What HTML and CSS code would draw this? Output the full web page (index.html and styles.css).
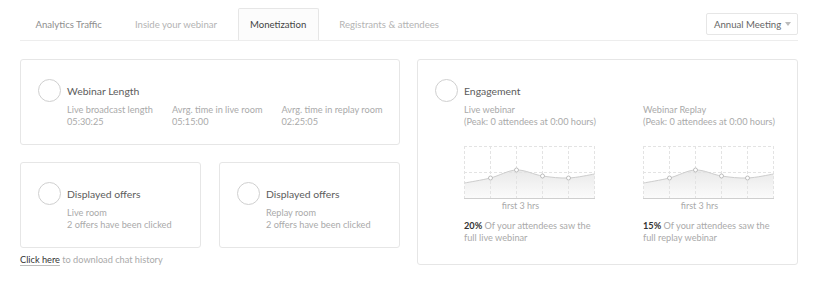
FILE: index.html
```html
<!DOCTYPE html>
<html>
<head>
<meta charset="utf-8">
<link rel="stylesheet" href="styles.css">
</head>
<body>
<div class="page">
  <div class="tabbar">
    <div class="tabs">
      <div class="tab tab-dark">Analytics Traffic</div>
      <div class="tab">Inside your webinar</div>
      <div class="tab active">Monetization</div>
      <div class="tab">Registrants &amp; attendees</div>
    </div>
    <div class="select">
      <span>Annual Meeting</span>
      <span class="caret"></span>
    </div>
  </div>

  <div class="main">
    <div class="left">
      <div class="card">
        <div class="card-head"><span class="ring"></span><span class="title">Webinar Length</span></div>
        <div class="card-body stats">
          <div class="stat"><div>Live broadcast length</div><div>05:30:25</div></div>
          <div class="stat"><div>Avrg. time in live room</div><div>05:15:00</div></div>
          <div class="stat"><div>Avrg. time in replay room</div><div>02:25:05</div></div>
        </div>
      </div>
      <div class="offers">
        <div class="card">
          <div class="card-head"><span class="ring"></span><span class="title">Displayed offers</span></div>
          <div class="card-body"><div>Live room</div><div>2 offers have been clicked</div></div>
        </div>
        <div class="card">
          <div class="card-head"><span class="ring"></span><span class="title">Displayed offers</span></div>
          <div class="card-body"><div>Replay room</div><div>2 offers have been clicked</div></div>
        </div>
      </div>
      <div class="chat"><a class="link">Click here</a> to download chat history</div>
    </div>

    <div class="card engage">
      <div class="card-head"><span class="ring"></span><span class="title">Engagement</span></div>
      <div class="card-body eng-cols">
        <div class="eng-col">
          <div>Live webinar</div>
          <div>(Peak: 0 attendees at 0:00 hours)</div>
          <svg class="chart" width="131" height="53" viewBox="0 0 131 53">
            <defs>
              <linearGradient id="g1" x1="0" y1="0" x2="0" y2="1">
                <stop offset="0" stop-color="#e9e9e9"/>
                <stop offset="1" stop-color="#fbfbfb"/>
              </linearGradient>
            </defs>
            <path d="M0.5 37 C4.8 36.2 17.3 34.2 26.5 32 C35.2 29.8 43.8 24.3 52.5 24 C61.2 23.7 69.8 28.7 78.5 30 C87.2 31.3 95.8 32.3 104.5 32 C113.2 31.7 126.2 28.7 130.5 28 L130.5 52 L0.5 52 Z" fill="url(#g1)"/>
            <g stroke="#e3e3e3" stroke-dasharray="3 2" fill="none">
              <line x1="0" y1="0.5" x2="131" y2="0.5"/>
              <line x1="0" y1="26.5" x2="131" y2="26.5"/>
              <line x1="0.5" y1="0" x2="0.5" y2="52"/>
              <line x1="26.5" y1="0" x2="26.5" y2="52"/>
              <line x1="52.5" y1="0" x2="52.5" y2="52"/>
              <line x1="78.5" y1="0" x2="78.5" y2="52"/>
              <line x1="104.5" y1="0" x2="104.5" y2="52"/>
              <line x1="130.5" y1="0" x2="130.5" y2="52"/>
            </g>
            <line x1="0" y1="52.5" x2="131" y2="52.5" stroke="#cfcfcf"/>
            <path d="M0.5 37 C4.8 36.2 17.3 34.2 26.5 32 C35.2 29.8 43.8 24.3 52.5 24 C61.2 23.7 69.8 28.7 78.5 30 C87.2 31.3 95.8 32.3 104.5 32 C113.2 31.7 126.2 28.7 130.5 28" fill="none" stroke="#cdcdcd" stroke-width="1"/>
            <g fill="#fff" stroke="#bdbdbd">
              <circle cx="26.5" cy="32" r="2"/>
              <circle cx="52.5" cy="24" r="2"/>
              <circle cx="78.5" cy="30" r="2"/>
              <circle cx="104.5" cy="32" r="2"/>
            </g>
          </svg>
          <div class="axis">first 3 hrs</div>
          <div class="pct"><b>20%</b> Of your attendees saw the<br>full live webinar</div>
        </div>
        <div class="eng-col">
          <div>Webinar Replay</div>
          <div>(Peak: 0 attendees at 0:00 hours)</div>
          <svg class="chart" width="131" height="53" viewBox="0 0 131 53">
            <defs>
              <linearGradient id="g2" x1="0" y1="0" x2="0" y2="1">
                <stop offset="0" stop-color="#e9e9e9"/>
                <stop offset="1" stop-color="#fbfbfb"/>
              </linearGradient>
            </defs>
            <path d="M0.5 37 C4.8 36.2 17.3 34.2 26.5 32 C35.2 29.8 43.8 24.3 52.5 24 C61.2 23.7 69.8 28.7 78.5 30 C87.2 31.3 95.8 32.3 104.5 32 C113.2 31.7 126.2 28.7 130.5 28 L130.5 52 L0.5 52 Z" fill="url(#g2)"/>
            <g stroke="#e3e3e3" stroke-dasharray="3 2" fill="none">
              <line x1="0" y1="0.5" x2="131" y2="0.5"/>
              <line x1="0" y1="26.5" x2="131" y2="26.5"/>
              <line x1="0.5" y1="0" x2="0.5" y2="52"/>
              <line x1="26.5" y1="0" x2="26.5" y2="52"/>
              <line x1="52.5" y1="0" x2="52.5" y2="52"/>
              <line x1="78.5" y1="0" x2="78.5" y2="52"/>
              <line x1="104.5" y1="0" x2="104.5" y2="52"/>
              <line x1="130.5" y1="0" x2="130.5" y2="52"/>
            </g>
            <line x1="0" y1="52.5" x2="131" y2="52.5" stroke="#cfcfcf"/>
            <path d="M0.5 37 C4.8 36.2 17.3 34.2 26.5 32 C35.2 29.8 43.8 24.3 52.5 24 C61.2 23.7 69.8 28.7 78.5 30 C87.2 31.3 95.8 32.3 104.5 32 C113.2 31.7 126.2 28.7 130.5 28" fill="none" stroke="#cdcdcd" stroke-width="1"/>
            <g fill="#fff" stroke="#bdbdbd">
              <circle cx="26.5" cy="32" r="2"/>
              <circle cx="52.5" cy="24" r="2"/>
              <circle cx="78.5" cy="30" r="2"/>
              <circle cx="104.5" cy="32" r="2"/>
            </g>
          </svg>
          <div class="axis">first 3 hrs</div>
          <div class="pct"><b>15%</b> Of your attendees saw the<br>full replay webinar</div>
        </div>
      </div>
    </div>
  </div>
</div>
</body>
</html>
```

FILE: styles.css
```css
* { box-sizing: border-box; }
body {
  margin: 0;
  background: #fff;
  font-family: "Lato", "Open Sans", sans-serif;
  color: #aaa;
}
.page {
  width: 778px;
  margin: 8px 0 0 20px;
}
.tabbar {
  display: flex;
  justify-content: space-between;
  align-items: flex-start;
  border-bottom: 1px solid #ededed;
  height: 33px;
}
.tabs {
  display: flex;
  gap: 8px;
  padding-left: 3px;
}
.tab {
  height: 32px;
  line-height: 32px;
  padding: 0 11.5px;
  font-size: 9.6px;
  color: #b4b4b4;
  border: 1px solid transparent;
  border-bottom: none;
  white-space: nowrap;
}
.tab-dark { color: #8e8e8e; }
.tab.active {
  color: #444;
  background: #fcfcfc;
  border-color: #e6e6e6;
  border-radius: 2px 2px 0 0;
}
.select {
  margin-top: 5px;
  width: 92px;
  height: 22px;
  border: 1px solid #e6e6e6;
  border-radius: 2px;
  display: flex;
  align-items: center;
  justify-content: space-between;
  padding: 0 6px 0 7px;
  font-size: 9.6px;
  color: #666;
  white-space: nowrap;
}
.caret {
  width: 0;
  height: 0;
  border-left: 3px solid transparent;
  border-right: 3px solid transparent;
  border-top: 4px solid #bbb;
}
.main {
  margin-top: 18px;
  display: grid;
  grid-template-columns: 380px 381px;
  gap: 17px;
  align-items: start;
}
.left {
  display: flex;
  flex-direction: column;
  gap: 17px;
}
.card {
  border: 1px solid #e6e6e6;
  border-radius: 3px;
  padding: 19px 17px 16px;
  font-size: 9.2px;
  line-height: 12px;
}
.card-head {
  display: flex;
  align-items: center;
  gap: 6px;
  height: 23px;
  margin-bottom: 2px;
}
.ring {
  width: 23px;
  height: 23px;
  border: 1px solid #cfcfcf;
  border-radius: 50%;
  flex: none;
}
.title {
  font-size: 10.4px;
  color: #5c5c5c;
}
.card-body {
  padding-left: 29px;
  white-space: nowrap;
}
.stats {
  display: flex;
  gap: 19px;
}
.offers {
  display: grid;
  grid-template-columns: 181px 181px;
  gap: 18px;
}
.chat {
  margin-top: -11px;
  font-size: 9.2px;
  line-height: 12px;
  color: #aaa;
}
.link {
  color: #333;
  text-decoration: underline;
  text-decoration-color: #bbb;
  text-underline-offset: 2px;
}
.engage {
  padding-bottom: 20px;
}
.eng-cols {
  display: grid;
  grid-template-columns: 131px 131px;
  gap: 48px;
}
.chart {
  display: block;
  margin-top: 18px;
}
.axis {
  margin-top: 1px;
  text-align: center;
  padding-right: 18px;
  font-size: 9px;
}
.pct {
  margin-top: 8px;
}
.pct b {
  color: #333;
  font-weight: 700;
}
```
